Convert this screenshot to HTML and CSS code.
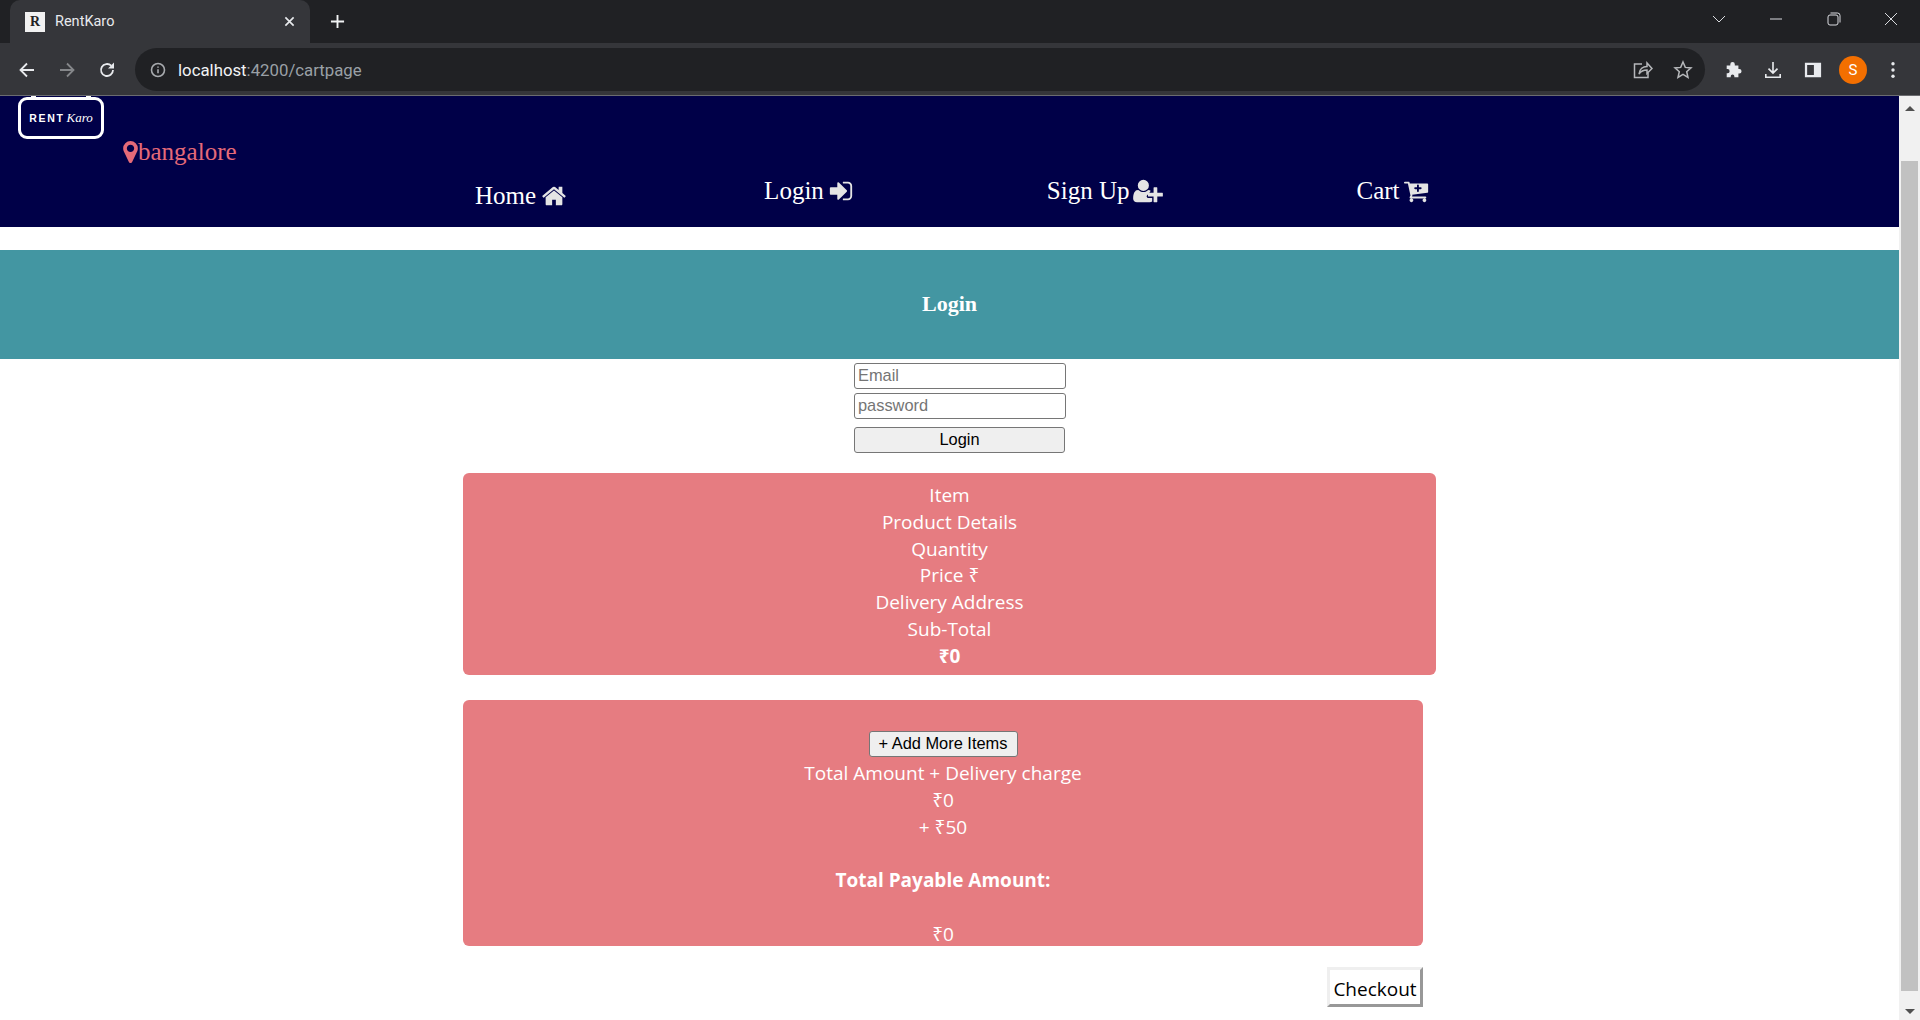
FILE: index.html
```html
<!DOCTYPE html>
<html lang="en">
<head>
  <meta charset="UTF-8" />
  <meta name="viewport" content="width=device-width, initial-scale=1.0"/>
  <title>RentKaro</title>
  <link rel="stylesheet" href="styles.css">
</head>
<body>
  <!-- Browser frame -->
  <div class="tabstrip">
    <div class="tab">
      <span class="favicon">R</span>
      <span class="tab-title">RentKaro</span>
      <svg class="tab-close" viewBox="0 0 12 12"><path d="M1.5 1.5l9 9M10.5 1.5l-9 9"/></svg>
    </div>
    <svg class="new-tab" viewBox="0 0 16 16"><path d="M8 1v14M1 8h14"/></svg>
    <div class="window-controls">
      <span class="win-btn"><svg viewBox="0 0 14 8"><path d="M1 1l6 6 6-6"/></svg></span>
      <span class="win-btn"><svg viewBox="0 0 14 8"><path d="M1 4h12"/></svg></span>
      <span class="win-btn"><svg viewBox="0 0 14 14"><rect x="1" y="3" width="10" height="10" rx="2"/><path d="M3.5 1h7a2.5 2.5 0 0 1 2.500 2.500v7"/></svg></span>
      <span class="win-btn"><svg viewBox="0 0 14 14"><path d="M1 1l12 12M13 1L1 13"/></svg></span>
    </div>
  </div>

  <div class="toolbar">
    <span class="tool"><svg viewBox="0 0 18 18"><path d="M16 9H2.5M9 2.500L2.500 9 9 15.500"/></svg></span>
    <span class="tool tool-off"><svg viewBox="0 0 18 18"><path d="M2 9h13.500M9 2.500L15.500 9 9 15.500"/></svg></span>
    <span class="tool"><svg viewBox="0 0 18 18"><path d="M15 9a6 6 0 1 1-1.800-4.300"/><path class="solid" d="M16 1.500v6h-6z"/></svg></span>
    <div class="omnibox">
      <svg class="info-icon" viewBox="0 0 16 16"><circle cx="8" cy="8" r="6.500"/><path d="M8 7.200v4M8 4.500v1.300"/></svg>
      <span class="url"><span class="url-host">localhost</span>:4200/cartpage</span>
      <svg class="omni-icon" viewBox="0 0 20 18"><path d="M9 3H1.500v13.500H15V12"/><path d="M6 13c.5-5 4-7.500 8-7.500V2l5 5.500-5 5V9c-3.500 0-6 1-8 4z"/></svg>
      <svg class="omni-icon" viewBox="0 0 20 20"><path d="M10 2l2.300 5.400 5.700.5-4.300 3.800 1.300 5.700L10 14.400l-5 3 1.300-5.700L2 7.900l5.700-.5z"/></svg>
    </div>
    <span class="tool tool-first"><svg viewBox="0 0 20 20"><path class="solid" d="M3 5h4V3.500a2.500 2.500 0 0 1 5 0V5h4v4h1a2.500 2.500 0 0 1 0 5h-1v4h-4.500v-1a2 2 0 0 0-4 0v1H3v-4.500h1a2.200 2.200 0 0 0 0-4.500H3z"/></svg></span>
    <span class="tool"><svg viewBox="0 0 20 20"><path d="M10 1v12M5 8.500l5 5 5-5M2 14.500V18h16v-3.500"/></svg></span>
    <span class="tool"><svg viewBox="0 0 20 20"><path class="solid" d="M1 2h18v16H1zM3.500 4.500v11H11v-11z" fill-rule="evenodd"/></svg></span>
    <span class="tool"><span class="avatar">S</span></span>
    <span class="tool"><svg viewBox="0 0 18 18"><circle class="solid" cx="9" cy="2.800" r="1.700"/><circle class="solid" cx="9" cy="9" r="1.700"/><circle class="solid" cx="9" cy="15.200" r="1.700"/></svg></span>
  </div>

  <div class="viewport">
    <main class="page">
      <header class="navbar">
        <div class="logo"><span class="logo-rent">RENT</span><span class="logo-karo">Karo</span></div>
        <div class="location">
          <svg class="marker" viewBox="384 128 1024 1536"><path d="M1152 640q0-106-75-181t-181-75-181 75-75 181 75 181 181 75 181-75 75-181zm256 0q0 109-33 179l-364 774q-16 33-47.500 52t-67.500 19-67.500-19-46.500-52l-365-774q-33-70-33-179 0-212 150-362t362-150 362 150 150 362z"/></svg>bangalore
        </div>
        <nav class="nav-links">
          <a class="nav-link nav-home">Home
            <svg class="nav-icon" viewBox="0 0 1792 1792"><path d="M1472 992v480q0 26-19 45t-45 19h-384v-384h-256v384h-384q-26 0-45-19t-19-45v-480q0-1 .5-3t.5-3l575-474 575 474q1 2 1 6zm223-69l-62 74q-8 9-21 11h-3q-13 0-21-7l-692-577-692 577q-12 8-24 7-13-2-21-11l-62-74q-8-10-7-23.500t11-21.500l719-599q32-26 76-26t76 26l244 204v-195q0-14 9-23t23-9h192q14 0 23 9t9 23v408l219 182q10 8 11 21.500t-7 23.500z"/></svg>
          </a>
          <a class="nav-link">Login
            <svg class="nav-icon" viewBox="0 0 1792 1792"><path d="M1312 896q0 26-19 45l-544 544q-19 19-45 19t-45-19-19-45v-288h-448q-26 0-45-19t-19-45v-384q0-26 19-45t45-19h448v-288q0-26 19-45t45-19 45 19l544 544q19 19 19 45zm352-352v704q0 119-84.500 203.500t-203.500 84.500h-320q-13 0-22.500-9.500t-9.500-22.500q0-4-1-20t-.5-26.500 3-23.500 10-19.500 20.500-6.500h320q66 0 113-47t47-113v-704q0-66-47-113t-113-47h-312l-11.500-1-11.500-3-8-5.500-7-9-2-13.500q0-4-1-20t-.5-26.500 3-23.500 10-19.500 20.500-6.500h320q119 0 203.500 84.500t84.500 203.500z"/></svg>
          </a>
          <a class="nav-link">Sign Up
            <svg class="nav-icon nav-icon-wide" viewBox="0 0 2048 1792"><path d="M704 896q-159 0-271.500-112.500t-112.500-271.500 112.500-271.500 271.500-112.500 271.500 112.500 112.500 271.500-112.500 271.500-271.500 112.500zm960 128h352q13 0 22.500 9.500t9.500 22.500v192q0 13-9.500 22.500t-22.500 9.500h-352v352q0 13-9.500 22.500t-22.500 9.500h-192q-13 0-22.500-9.500t-9.500-22.500v-352h-352q-13 0-22.500-9.500t-9.500-22.500v-192q0-13 9.500-22.500t22.500-9.500h352v-352q0-13 9.500-22.500t22.500-9.500h192q13 0 22.500 9.500t9.500 22.500v352zm-736 224q0 52 38 90t90 38h256v238q-68 50-171 50h-874q-121 0-194-69t-73-190q0-53 3.500-103.500t14-109 26.500-108.500 43-97.500 62-81 85.500-53.500 111.500-20q19 0 39 17 79 61 154.500 91.500t164.500 30.500 164.500-30.500 154.500-91.500q20-17 39-17 78 0 133 38-9 29-9 58z"/></svg>
          </a>
          <a class="nav-link">Cart
            <svg class="nav-icon" viewBox="0 0 1792 1792"><path fill-rule="evenodd" d="M1664 448v512q0 24-16 42.500t-41 21.500l-1044 122q1 7 4.500 21.500t6 26.500 2.500 22q0 16-24 64h920q26 0 45 19t19 45-19 45-45 19h-1024q-26 0-45-19t-19-45q0-14 11-39.500t29.500-59.500 20.500-38l-177-823h-204q-26 0-45-19t-19-45 19-45 45-19h256q16 0 28.500 6.500t20 15.500 13 24.500 7.500 26.500 5.500 29.500 4.500 25.500h1201q26 0 45 19t19 45zM1216 704q0-26-19-45t-45-19h-128v-128q0-26-19-45t-45-19-45 19-19 45v128h-128q-26 0-45 19t-19 45 19 45 45 19h128v128q0 26 19 45t45 19 45-19 19-45v-128h128q26 0 45-19t19-45zm-576 832q0 53-37.500 90.500t-90.500 37.500-90.500-37.500-37.500-90.500 37.500-90.500 90.500-37.500 90.500 37.500 37.500 90.500zm896 0q0 53-37.500 90.500t-90.500 37.500-90.500-37.500-37.500-90.500 37.500-90.500 90.500-37.500 90.500 37.500 37.500 90.500z"/></svg>
          </a>
        </nav>
      </header>

      <h2 class="login-banner">Login</h2>

      <form class="login-form">
        <input type="text" placeholder="Email">
        <input type="password" placeholder="password">
        <button type="button" class="login-btn">Login</button>
      </form>

      <section class="card card-items">
        <div>Item</div>
        <div>Product Details</div>
        <div>Quantity</div>
        <div>Price ₹</div>
        <div>Delivery Address</div>
        <div>Sub-Total</div>
        <div><strong>₹0</strong></div>
      </section>

      <section class="card card-total">
        <button type="button" class="add-btn">+ Add More Items</button>
        <div>Total Amount + Delivery charge</div>
        <div>₹0</div>
        <div>+ ₹50</div>
        <div>&nbsp;</div>
        <div><strong>Total Payable Amount:</strong></div>
        <div>&nbsp;</div>
        <div>₹0</div>
      </section>

      <div class="checkout-row">
        <button type="button" class="checkout-btn">Checkout</button>
      </div>
    </main>

    <aside class="scrollbar">
      <span class="arrow-up"></span>
      <span class="thumb"></span>
      <span class="arrow-down"></span>
    </aside>
  </div>
</body>
</html>
```

FILE: styles.css
```css
html, body {
  margin: 0;
  height: 100%;
  overflow: hidden;
}

body {
  font-family: 'Liberation Serif', serif;
  background: #fff;
  display: flex;
  flex-direction: column;
}

/* Browser frame */
svg {
  display: block;
  fill: none;
}

.tabstrip {
  height: 43px;
  background: #202124;
  display: flex;
  align-items: flex-end;
  padding-left: 10px;
  flex-shrink: 0;
}

.tab {
  width: 300px;
  height: 43px;
  box-sizing: border-box;
  padding: 0 14px 0 15px;
  background: #35363a;
  border-radius: 10px 10px 0 0;
  display: flex;
  align-items: center;
  color: #e8eaed;
  font: 14.5px Roboto, sans-serif;
}

.favicon {
  width: 20px;
  height: 20px;
  background: #f1f1f1;
  color: #222;
  font: bold 14px/20px 'Liberation Serif', serif;
  text-align: center;
  margin-right: 10px;
}

.tab-title {
  flex: 1;
}

.tab-close {
  width: 11px;
  height: 11px;
  stroke: #e8eaed;
  stroke-width: 1.8;
  margin-right: 1px;
}

.new-tab {
  width: 15px;
  height: 15px;
  stroke: #f1f3f4;
  stroke-width: 2;
  margin: 0 0 14px 20px;
}

.window-controls {
  margin-left: auto;
  display: flex;
  align-self: flex-start;
}

.win-btn {
  width: 57.5px;
  height: 37px;
  display: flex;
  align-items: center;
  justify-content: center;
}

.win-btn svg {
  width: 14px;
  height: 14px;
  stroke: #dadce0;
  stroke-width: 1;
}

.toolbar {
  height: 52px;
  background: #35363a;
  border-bottom: 1px solid #6b6c70;
  display: flex;
  align-items: flex-start;
  padding-left: 7px;
  flex-shrink: 0;
}

.tool {
  width: 40px;
  height: 43px;
  margin-top: 5px;
  display: flex;
  align-items: center;
  justify-content: center;
}

.tool svg {
  width: 18px;
  height: 18px;
  stroke: #e8eaed;
  stroke-width: 1.8;
}

.tool .solid {
  fill: #e8eaed;
  stroke: none;
}

.tool-off svg {
  stroke: #85878a;
}

.tool-first {
  margin-left: 8px;
}

.omnibox {
  width: 1570px;
  height: 43px;
  margin: 5px 0 0 8px;
  box-sizing: border-box;
  padding: 0 12px 0 15px;
  background: #202124;
  border-radius: 22px;
  display: flex;
  align-items: center;
  color: #9aa0a6;
  font: 16.8px Roboto, sans-serif;
}

.info-icon {
  width: 16px;
  height: 16px;
  stroke: #a8abaf;
  stroke-width: 1.6;
  margin-right: 12px;
}

.url {
  flex: 1;
}

.url-host {
  color: #f1f3f4;
}

.omni-icon {
  width: 20px;
  height: 20px;
  stroke: #b5b7ba;
  stroke-width: 1.5;
  margin-left: 20px;
}

.avatar {
  width: 28px;
  height: 28px;
  border-radius: 50%;
  background: #f36f00;
  color: #fff;
  font: 15px/28px Roboto, sans-serif;
  text-align: center;
}

/* Page */
.viewport {
  flex: 1;
  display: flex;
  min-height: 0;
}

.page {
  flex: 1;
  min-width: 0;
  overflow: hidden;
}

.navbar {
  height: 131px;
  background: #000048;
  padding-top: 1px;
  box-sizing: border-box;
}

.logo {
  width: 86px;
  height: 42px;
  margin-left: 18px;
  box-sizing: border-box;
  border: 3px solid #fff;
  border-radius: 9px;
  position: relative;
  display: flex;
  align-items: center;
  justify-content: center;
  color: #fff;
}

.logo::before,
.logo::after {
  content: "";
  position: absolute;
  top: -4px;
  width: 5px;
  height: 3px;
  background: #fff;
}

.logo::before { left: 10px; }
.logo::after { right: 10px; }

.logo-rent {
  font: bold 10.5px 'Liberation Sans', sans-serif;
  letter-spacing: 1.7px;
}

.logo-karo {
  font: italic 13px 'Liberation Serif', serif;
  margin-left: 2px;
}

.location {
  margin-left: 123px;
  display: flex;
  align-items: center;
  height: 26px;
  font-size: 25px;
  color: #e56a78;
}

.marker {
  width: 15px;
  height: 22px;
  fill: #e56a78;
}

.nav-links {
  display: flex;
  gap: 193px;
  padding-left: 475px;
  margin-top: 11px;
}

.nav-link {
  font-size: 25px;
  line-height: 29px;
  color: #fff;
  display: flex;
  align-items: center;
  gap: 4px;
}

.nav-home {
  position: relative;
  top: 5px;
  gap: 5px;
  margin-right: 4px;
}

.nav-icon {
  width: 26px;
  height: 26px;
  fill: #e4e4e4;
}

.nav-icon-wide {
  width: 30px;
}

.login-banner {
  height: 109px;
  margin: 23px 0 0;
  padding-bottom: 2px;
  box-sizing: border-box;
  background: #4396a2;
  color: #fff;
  font-size: 22px;
  display: flex;
  align-items: center;
  justify-content: center;
}

.login-form {
  width: 212px;
  margin: 4px 0 0 854px;
  display: flex;
  flex-direction: column;
  gap: 4px;
}

.login-form input {
  height: 26px;
  box-sizing: border-box;
  padding: 0 3px 2px;
  border: 1px solid #767676;
  border-radius: 3px;
  font: 16.4px 'Liberation Sans', sans-serif;
}

.login-form input::placeholder {
  color: #757575;
}

.login-btn,
.add-btn {
  box-sizing: border-box;
  border: 1px solid #767676;
  border-radius: 3px;
  background: #efefef;
  color: #000;
  padding: 0 0 2px;
  font: 16.4px 'Liberation Sans', sans-serif;
}

.login-btn {
  height: 26px;
  width: 211px;
  margin-top: 4px;
}

.card {
  width: 973px;
  margin: 20px 0 0 463px;
  background: #e67c81;
  border-radius: 6px;
  color: #fff;
  font: 19px/26.8px 'Open Sans', 'Noto Sans', sans-serif;
  text-align: center;
}

.card-items {
  height: 202px;
  box-sizing: border-box;
  padding-top: 9px;
}

.card-total {
  width: 960px;
  height: 246px;
  margin-top: 25px;
  box-sizing: border-box;
  padding-top: 31px;
}

.add-btn {
  display: block;
  height: 26px;
  width: 149px;
  margin: 0 auto 3px;
}

.checkout-row {
  width: 960px;
  margin: 21px 0 0 463px;
  display: flex;
  justify-content: flex-end;
}

.checkout-btn {
  width: 96px;
  height: 40px;
  padding: 3px 0 0;
  background: #fff;
  color: #000;
  border: 3px solid;
  border-color: #efefef #989898 #989898 #efefef;
  font: 19px 'Open Sans', sans-serif;
}

/* Scrollbar, the reference page is scrolled a little */
.scrollbar {
  width: 21px;
  background: #f1f1f1;
  display: flex;
  flex-direction: column;
  align-items: center;
  flex-shrink: 0;
}

.arrow-up {
  margin-top: 10px;
  border: 5px solid transparent;
  border-top: 0;
  border-bottom: 5px solid #505050;
}

.thumb {
  width: 17px;
  flex: 1;
  background: #c1c1c1;
  margin: 50px 0 18px;
}

.arrow-down {
  margin-bottom: 6px;
  border: 5px solid transparent;
  border-bottom: 0;
  border-top: 5px solid #505050;
}
```
